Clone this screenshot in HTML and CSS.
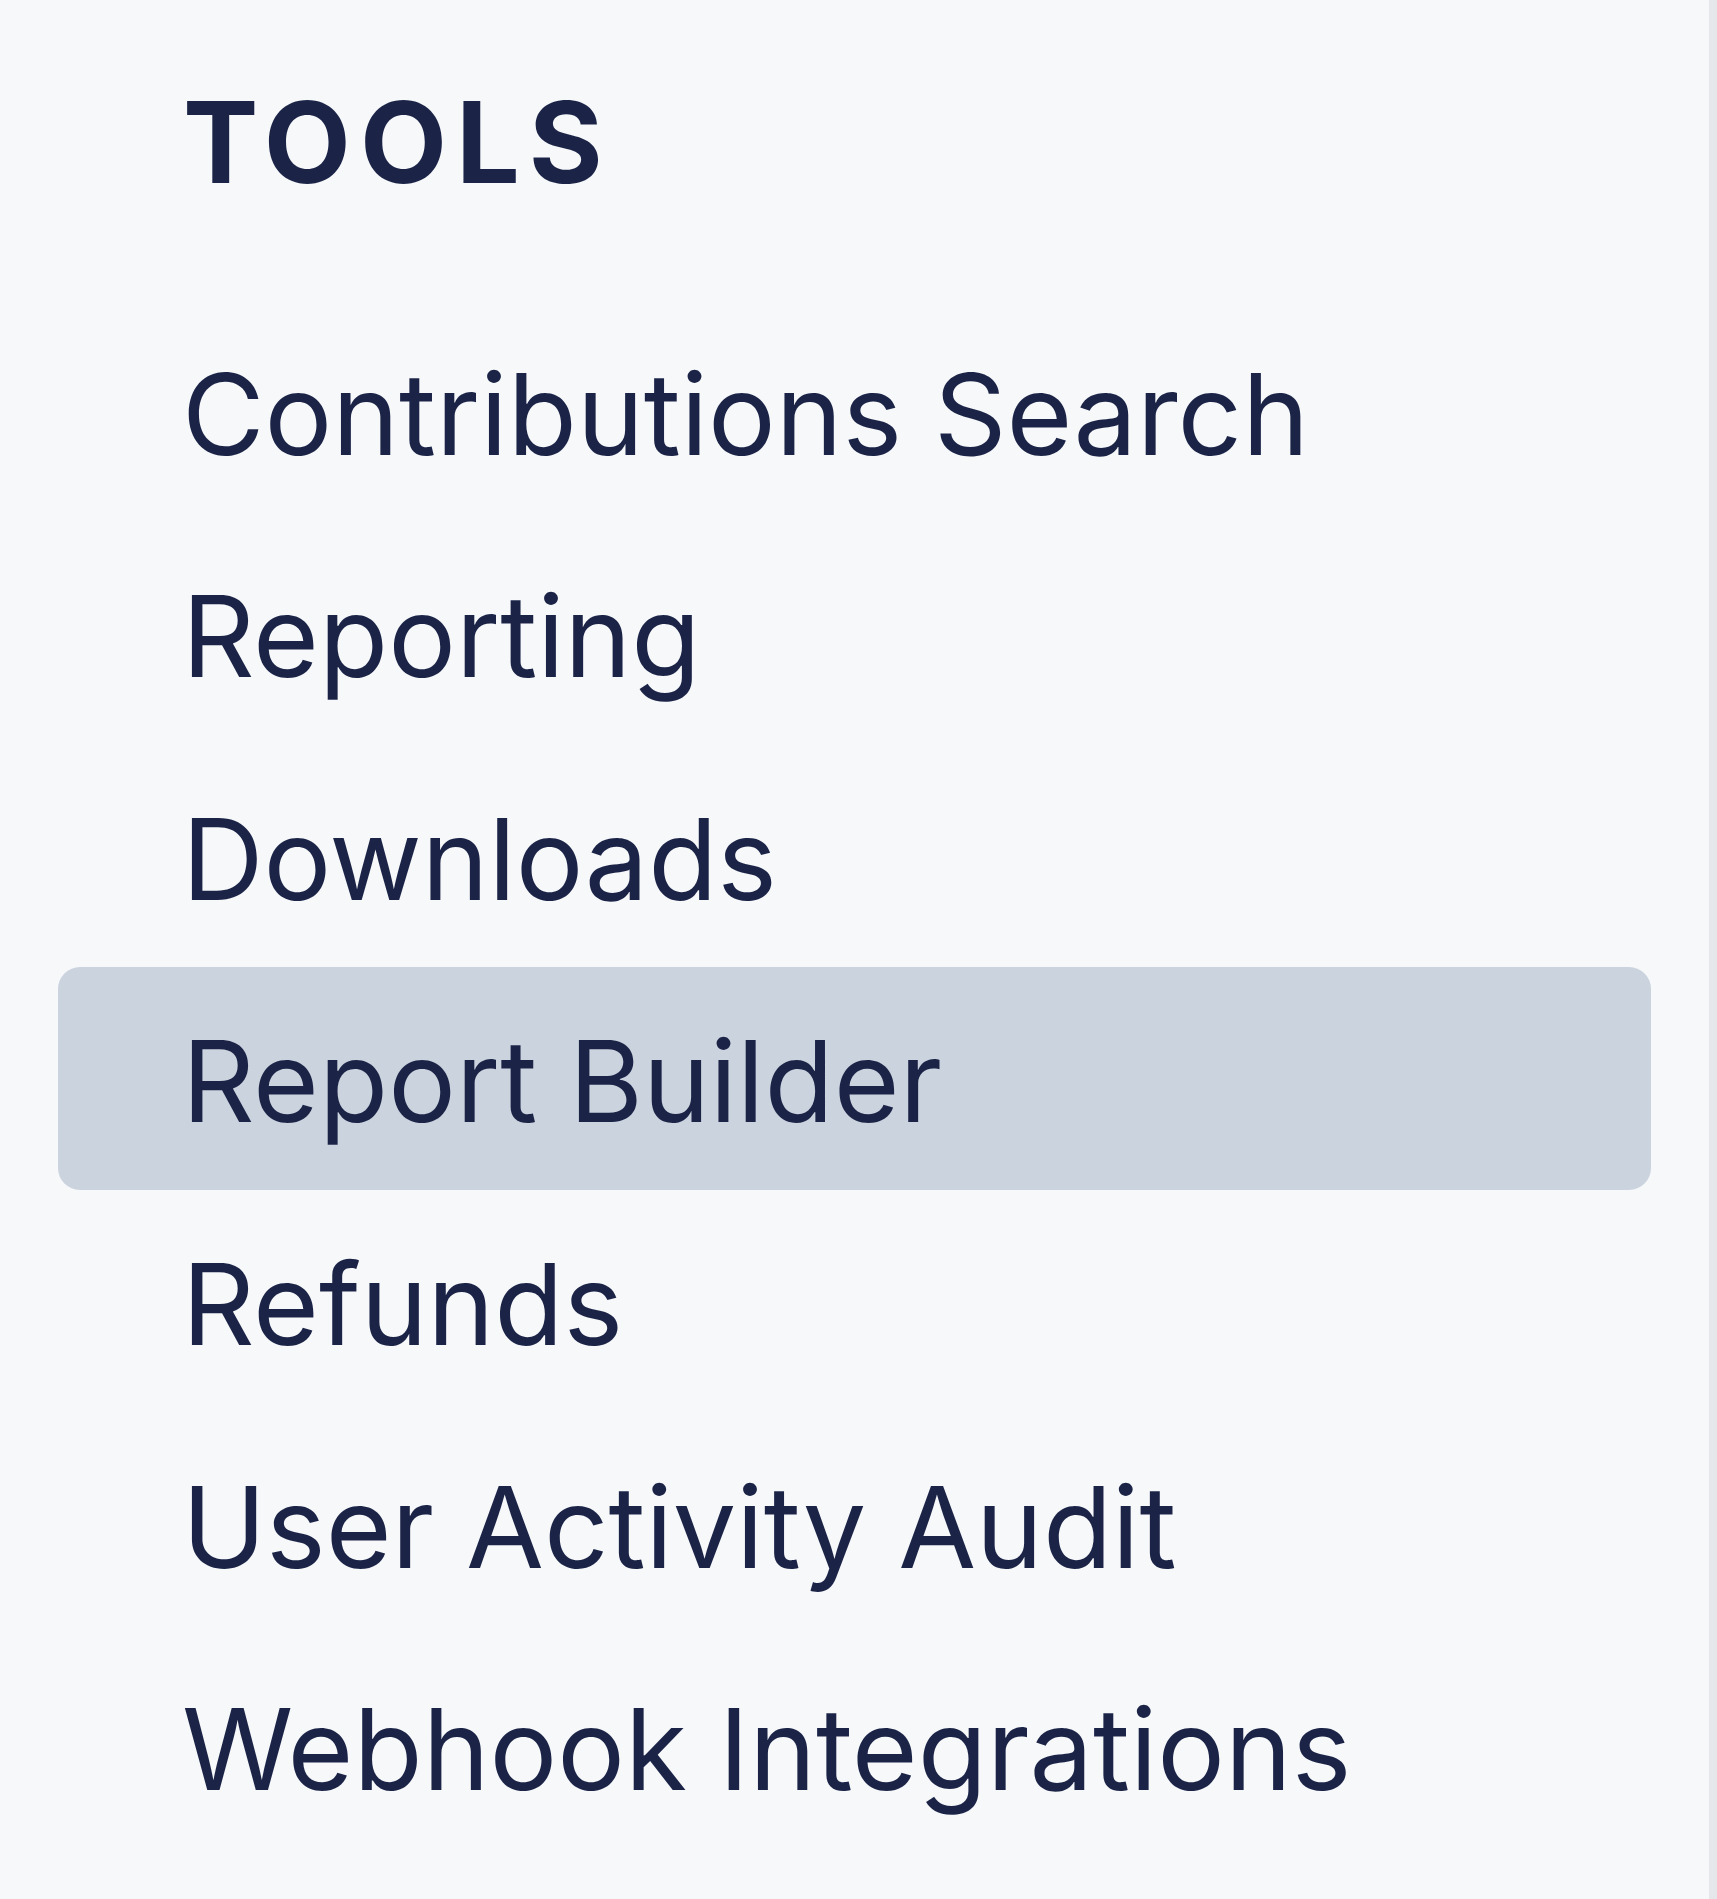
FILE: index.html
```html
<!DOCTYPE html>
<html lang="en">
<head>
<meta charset="utf-8">
<title>Tools</title>
<link rel="stylesheet" href="styles.css">
</head>
<body>
<aside class="sidebar">
  <h2 class="heading">TOOLS</h2>
  <nav class="menu">
    <a class="item">Contributions Search</a>
    <a class="item">Reporting</a>
    <a class="item">Downloads</a>
    <a class="item active">Report Builder</a>
    <a class="item">Refunds</a>
    <a class="item">User Activity Audit</a>
    <a class="item">Webhook Integrations</a>
  </nav>
</aside>
</body>
</html>
```

FILE: styles.css
```css
html, body {
  margin: 0;
  padding: 0;
  background: #f7f8fa;
}

.sidebar {
  box-sizing: border-box;
  width: 1717px;
  height: 1899px;
  padding: 75px 58px 0 58px;
  border-right: 8px solid #e5e7eb;
  background: #f7f8fa;
  font-family: Inter, "Noto Sans", sans-serif;
  color: #1b2447;
  overflow: hidden;
}

.heading {
  margin: 0;
  padding-left: 125px;
  font-size: 113px;
  font-weight: 700;
  line-height: 1.2;
  letter-spacing: 9px;
}

.menu {
  display: flex;
  flex-direction: column;
  margin-top: 89px;
}

.item {
  display: block;
  box-sizing: border-box;
  height: 222.6px;
  padding: 47px 0 0 124px;
  font-size: 113px;
  font-weight: 400;
  line-height: 1.2;
  border-radius: 22px;
  color: #1b2447;
  white-space: nowrap;
}

.item.active {
  background: #cbd3de;
}
```
